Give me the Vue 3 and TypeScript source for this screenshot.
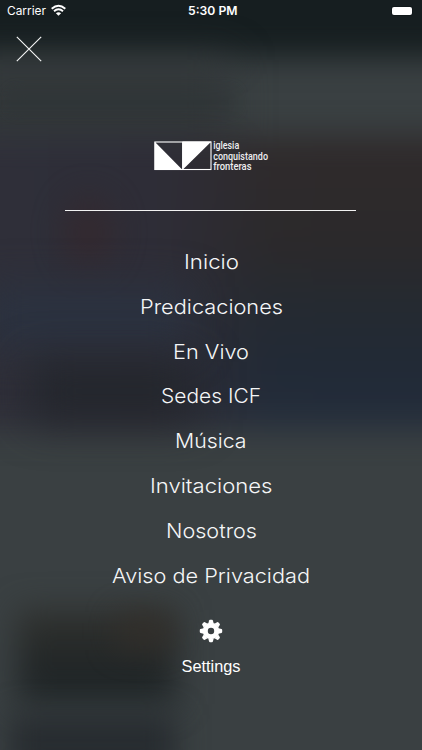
<script setup lang="ts">
interface MenuItem {
  label: string
  width: number
}

// width: drawn width of each label in pixels
const items: MenuItem[] = [
  { label: 'Inicio', width: 55 },
  { label: 'Predicaciones', width: 143 },
  { label: 'En Vivo', width: 76 },
  { label: 'Sedes ICF', width: 100 },
  { label: 'Música', width: 71.5 },
  { label: 'Invitaciones', width: 122.5 },
  { label: 'Nosotros', width: 91 },
  { label: 'Aviso de Privacidad', width: 198 },
]
const teeth = [0, 45, 90, 135, 180, 225, 270, 315]
</script>

<template>
  <main class="screen">
    <div class="backdrop" aria-hidden="true">
      <i class="blob header"></i>
      <i class="blob shade"></i>
      <i class="blob title"></i>
      <i class="blob photo"></i>
      <i class="blob red"></i>
      <i class="blob blue"></i>
      <i class="blob dusk"></i>
      <i class="blob thumb"></i>
      <i class="blob warm"></i>
      <i class="blob next"></i>
    </div>

    <header class="status">
      <div class="carrier">
        <svg width="46" height="22"><text x="0" y="15.2" textLength="39" lengthAdjust="spacingAndGlyphs">Carrier</text></svg>
        <svg class="wifi" width="15" height="11" viewBox="0 0 15 11">
          <path d="M.7 3.8Q7.5-2.1 14.3 3.8M3 6.2q4.5-3.8 9 0" fill="none" stroke="#fff" stroke-width="1.9" />
          <path d="M7.5 10.8 4.9 8.2q2.6-2.1 5.2 0z" fill="#fff" />
        </svg>
      </div>
      <svg class="time" width="52" height="22"><text x="1" y="15.2" textLength="49.5" lengthAdjust="spacingAndGlyphs">5:30 PM</text></svg>
      <div class="battery"><span></span></div>
    </header>

    <button class="close" aria-label="Cerrar">
      <svg width="26" height="26" viewBox="0 0 26 26"><path d="M.8.8l24.4 24.4M25.2.8.8 25.2" stroke="#f4f5f5" stroke-width="1.15" /></svg>
    </button>

    <svg class="logo" width="116" height="32" viewBox="0 0 116 32">
      <rect x="1" y="2" width="56" height="27.5" fill="none" stroke="#fff" stroke-width="1.1" />
      <path d="M28.6 2v27.5" stroke="#fff" stroke-width="1" />
      <path d="M.5 1.5 28.6 29.9H.5zM28.4 1.5h29L28.4 29.9z" fill="#fff" />
      <text x="59.2" y="9.4" textLength="26" lengthAdjust="spacingAndGlyphs">iglesia</text>
      <text x="59.2" y="19.7" textLength="54.8" lengthAdjust="spacingAndGlyphs">conquistando</text>
      <text x="59.2" y="30" textLength="38.3" lengthAdjust="spacingAndGlyphs">fronteras</text>
    </svg>
    <hr class="rule" />

    <nav class="menu">
      <a v-for="item in items" :key="item.label">
        <svg :width="item.width" height="44.8">
          <text x="0" y="29.4" :textLength="item.width" lengthAdjust="spacingAndGlyphs">{{ item.label }}</text>
        </svg>
      </a>
    </nav>

    <div class="settings">
      <svg width="24" height="24" viewBox="-12 -12 24 24">
        <path fill="#fff" fill-rule="evenodd" d="M0-8.3A8.3 8.3 0 1 1 0 8.3 8.3 8.3 0 1 1 0-8.3M0-3.2A3.2 3.2 0 1 0 0 3.2 3.2 3.2 0 1 0 0-3.2" />
        <path v-for="angle in teeth" :key="angle" fill="#fff" :transform="`rotate(${angle})`" d="M-2.7-7.5-1.9-10.5Q-1.7-11.2-1-11.2h2q.7 0 .9.7L2.7-7.5z" />
      </svg>
      <svg width="60" height="24"><text x="0.5" y="17" textLength="59" lengthAdjust="spacingAndGlyphs">Settings</text></svg>
    </div>
  </main>
</template>

<style>
body { margin: 0; background: #3a4042; }
</style>

<style scoped>
.screen {
  position: relative;
  width: 422px;
  height: 750px;
  overflow: hidden;
  display: flex;
  flex-direction: column;
  align-items: center;
  color: #fff;
}
.screen > :not(.backdrop) { position: relative; flex: none; }
svg { display: block; overflow: visible; }
text { fill: #fff; }
.backdrop { position: absolute; inset: 0; background: #3a4042; }
.blob { position: absolute; display: block; }
.header { left: -60px; top: -60px; width: 542px; height: 117px; background: #161e20; filter: blur(15px); }
.shade { left: -40px; top: 60px; width: 270px; height: 90px; background: #323739; filter: blur(20px); }
.title { left: 12px; top: 92px; width: 222px; height: 18px; background: #2f3537; filter: blur(7px); opacity: 0.5; }
.photo {
  left: -60px; top: 136px; width: 542px; height: 294px;
  background:
    linear-gradient(90deg, #2f303a 0%, #2e2d37 40%, transparent 62%),
    linear-gradient(#302b2c 0%, #2b292b 38%, #252a31 57%, #212a37 82%, #262f3d 100%);
  filter: blur(15px);
}
.red { left: 64px; top: 195px; width: 50px; height: 74px; border-radius: 50%; background: #35282d; filter: blur(16px); opacity: 0.75; }
.blue { left: -20px; top: 287px; width: 210px; height: 60px; background: #2b3240; filter: blur(20px); }
.dusk { left: 30px; top: 362px; width: 165px; height: 58px; background: #23262c; filter: blur(22px); }
.thumb { left: 18px; top: 610px; width: 158px; height: 94px; background: linear-gradient(#30312e, #1f2426 75%, #22292b); filter: blur(16px); }
.warm { left: 115px; top: 612px; width: 58px; height: 38px; background: #342f2a; filter: blur(15px); opacity: 0.7; }
.next { left: 10px; top: 715px; width: 166px; height: 60px; background: #272c30; filter: blur(15px); }

.status {
  width: 100%;
  height: 22px;
  box-sizing: border-box;
  padding: 0 9px 0 7px;
  display: grid;
  grid-template-columns: 1fr 52px 1fr;
  align-items: center;
  font: 12px Inter, Roboto, sans-serif;
}
.carrier { display: flex; align-items: center; }
.wifi { margin-left: -2px; margin-top: -1px; }
.time { font-weight: 600; transform: translateX(3px); }
.battery { justify-self: end; padding: 1px; border-radius: 3px; background: #10181a; margin-top: -1px; }
.battery span { display: block; width: 20px; height: 8px; border-radius: 2px; background: #fff; }
.close { align-self: flex-start; margin: 14px 0 0 16px; padding: 0; border: 0; background: none; }
.logo { margin: 78px 0 0 2px; font: 500 10px Roboto, sans-serif; }
.logo text { fill: #eeeef0; }
.rule { width: 291px; height: 1px; margin: 38px 1px 0 0; border: 0; background: #f2f2f2; }
.menu { margin-top: 29px; display: flex; flex-direction: column; align-items: center; }
.menu text { font: 300 20px Inter, Lato, sans-serif; fill: #f5f6f7; }
.settings { margin-top: 21px; display: flex; flex-direction: column; align-items: center; gap: 11.4px; }
.settings text { font: 16.5px "Liberation Sans", Arial, sans-serif; }
</style>
